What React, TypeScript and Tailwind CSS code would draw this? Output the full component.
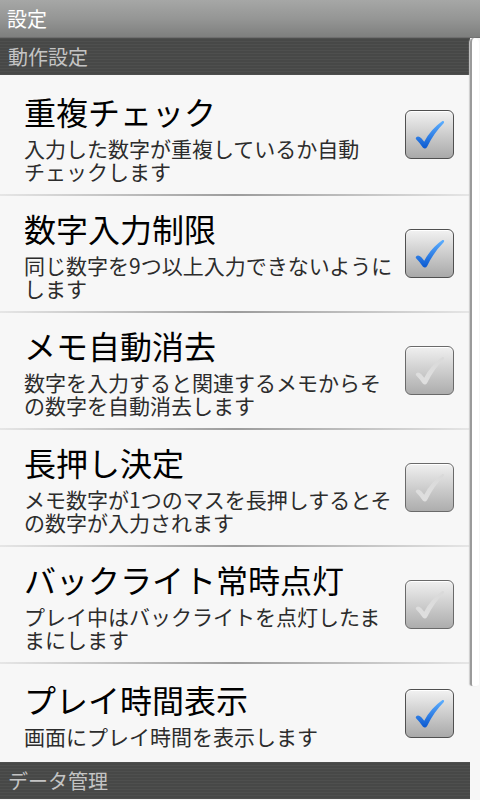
import React from "react";

type Item = { title: string; lines: string[]; checked: boolean };

const items: Item[] = [
  { title: "重複チェック", lines: ["入力した数字が重複しているか自動", "チェックします"], checked: true },
  { title: "数字入力制限", lines: ["同じ数字を9つ以上入力できないように", "します"], checked: true },
  { title: "メモ自動消去", lines: ["数字を入力すると関連するメモからそ", "の数字を自動消去します"], checked: false },
  { title: "長押し決定", lines: ["メモ数字が1つのマスを長押しするとそ", "の数字が入力されます"], checked: false },
  { title: "バックライト常時点灯", lines: ["プレイ中はバックライトを点灯したま", "まにします"], checked: false },
  { title: "プレイ時間表示", lines: ["画面にプレイ時間を表示します"], checked: true },
];

function CheckBox({ checked }: { checked: boolean }) {
  return (
    <div
      className={
        checked
          ? "w-[49px] h-[49px] rounded-[6px] border border-[#505050] bg-gradient-to-b from-[#f2f2f2] to-[#a9a9a9] flex items-center justify-center shadow-[inset_0_1px_0_#ffffff]"
          : "w-[49px] h-[49px] rounded-[6px] border border-[#6a6a6a] bg-gradient-to-b from-[#f0f0f0] to-[#adadad] flex items-center justify-center shadow-[inset_0_1px_0_#ffffff]"
      }
    >
      <svg width="49" height="49" viewBox="0 0 49 49">
        <defs>
          <linearGradient id="blueck" x1="0" y1="0" x2="0" y2="1">
            <stop offset="0" stopColor="#5fb0ff" />
            <stop offset="1" stopColor="#0a58d0" />
          </linearGradient>
          <linearGradient id="greyck" x1="0" y1="0" x2="0" y2="1">
            <stop offset="0" stopColor="#d8d8d8" />
            <stop offset="1" stopColor="#e6e6e6" />
          </linearGradient>
        </defs>
        <path
          d="M10.5 27.5 Q13 25.5 16 28.5 L19 32 Q26 19 38 10.5 Q40.5 10 39.5 12.5 Q29 23 22 37.5 Q20 40.5 17.5 38 Q14 33 10.5 29.5 Q9.8 28.5 10.5 27.5 Z"
          fill={checked ? "url(#blueck)" : "url(#greyck)"}
          opacity={checked ? 1 : 0.85}
        />
      </svg>
    </div>
  );
}

function Divider() {
  return <div className="h-[2px] bg-gradient-to-r from-[#e6e6e6] via-[#9c9c9c] to-[#e6e6e6]" />;
}

function SectionHeader({ text }: { text: string }) {
  return (
    <div className="h-[37px] bg-[#4a4b4a] flex items-center pl-[8px] text-[20px] leading-none text-[#c4c4c4] bg-[repeating-linear-gradient(180deg,#4e4f4e_0px,#4e4f4e_1px,#474847_1px,#474847_3px)]">
      {text}
    </div>
  );
}

export default function App() {
  return (
    <div
      className="relative w-[480px] h-[800px] overflow-hidden bg-[#f7f7f7]"
      style={{ fontFamily: '"Noto Sans CJK JP", "Noto Sans", sans-serif' }}
    >
      <div className="h-[38px] bg-gradient-to-b from-[#a6a7a6] via-[#959695] to-[#7e7f7e] flex items-center pl-[7px] text-[20px] leading-none text-white border-b border-[#6e6e6e]">
        設定
      </div>
      <div className="w-[470px]">
        <SectionHeader text="動作設定" />
        {items.map((it, i) => (
          <div key={i}>
            <div className="flex items-center min-h-[98px] pl-[24px] pr-[16px]">
              <div className={i === 0 ? "flex-1 pt-[17px] pb-[11px]" : "flex-1 pt-[13px] pb-[11px]"}>
                <div className="h-[38px] text-[32px] leading-[38px] text-black">{it.title}</div>
                <div className="mt-[7px] text-[21px] leading-[23px] text-[#2c2c2c] w-[372px]">
                  {it.lines.map((l, j) => (
                    <div key={j} className="whitespace-nowrap">{l}</div>
                  ))}
                </div>
              </div>
              <CheckBox checked={it.checked} />
            </div>
            {i < items.length - 1 && <Divider />}
          </div>
        ))}
        <SectionHeader text="データ管理" />
      </div>
      <div className="absolute right-[1px] top-[38px] w-[9px] h-[648px] bg-white rounded-t-[5px] rounded-b-[3px] border-l-2 border-[#9a9a9a] shadow-[-1px_0_1px_#cccccc]" />
    </div>
  );
}
